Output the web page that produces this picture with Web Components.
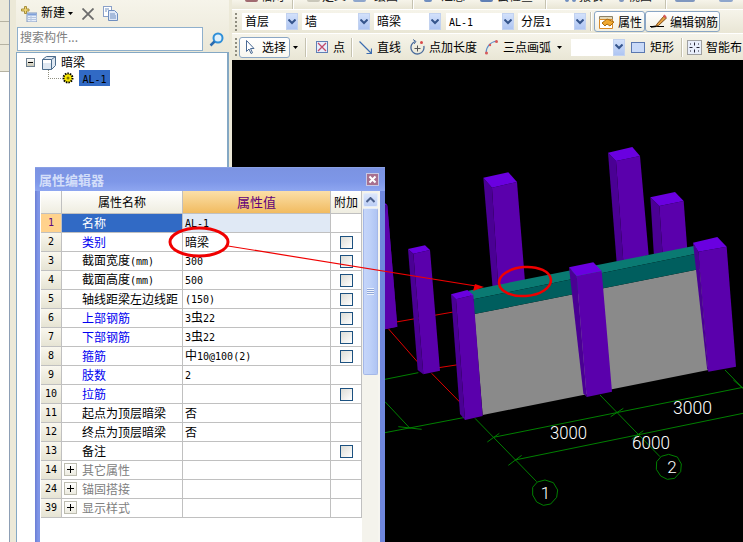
<!DOCTYPE html>
<html>
<head>
<meta charset="utf-8">
<title>属性编辑器</title>
<style>
  html, body { margin: 0; height: 100%; overflow: hidden; background: #000; }
  body { font: 12px/16px "Noto Sans CJK SC", "Liberation Sans", sans-serif; color: #000; }
</style>
</head>
<body>
<cad-workspace>
  <side-panel slot="side"></side-panel>
  <tool-bars slot="bars"></tool-bars>
  <scene-view slot="scene"></scene-view>
  <prop-editor>
    <prop-row num="1" name="名称" value="AL-1" selected></prop-row>
    <prop-row num="2" name="类别" value="暗梁" kind="link" check></prop-row>
    <prop-row num="3" name="截面宽度(mm)" value="300" check></prop-row>
    <prop-row num="4" name="截面高度(mm)" value="500" check></prop-row>
    <prop-row num="5" name="轴线距梁左边线距" value="(150)" check></prop-row>
    <prop-row num="6" name="上部钢筋" value="3虫22" kind="link" check></prop-row>
    <prop-row num="7" name="下部钢筋" value="3虫22" kind="link" check></prop-row>
    <prop-row num="8" name="箍筋" value="中10@100(2)" kind="link" check></prop-row>
    <prop-row num="9" name="肢数" value="2" kind="link"></prop-row>
    <prop-row num="10" name="拉筋" kind="link" check></prop-row>
    <prop-row num="11" name="起点为顶层暗梁" value="否"></prop-row>
    <prop-row num="12" name="终点为顶层暗梁" value="否"></prop-row>
    <prop-row num="13" name="备注" check></prop-row>
    <prop-row num="14" name="其它属性" kind="group"></prop-row>
    <prop-row num="24" name="锚固搭接" kind="group"></prop-row>
    <prop-row num="39" name="显示样式" kind="group"></prop-row>
  </prop-editor>
  <markup-layer></markup-layer>
</cad-workspace>

<script>
// half width latin, like the bitmap font of the old app
const latin = text => text.replace(/[\x20-\x7e]+/g, m => `<span class="n">${m}</span>`)
const LATIN_CSS = `.n { font: 10px/16px "DejaVu Sans Mono", monospace; white-space: pre; }`

class CadWorkspace extends HTMLElement {
  constructor() {
    super()
    this.attachShadow({ mode: 'open' }).innerHTML = `
      <style>
        :host {
          display: grid;
          grid-template-columns: 232px 511px;
          grid-template-rows: 60px 482px;
          width: 743px;
          height: 542px;
          position: relative;
          overflow: hidden;
        }
        ::slotted([slot="side"]) { grid-row: 1 / 3; }
      </style>
      <slot name="side"></slot>
      <slot name="bars"></slot>
      <slot name="scene"></slot>
      <slot></slot>
    `
  }
}

class SidePanel extends HTMLElement {
  constructor() {
    super()
    this.attachShadow({ mode: 'open' }).innerHTML = `
      <style>
        :host { display: flex; background: #ece9d8; height: 542px; }
        .tabs { width: 9px; background: #fff; border-right: 1px solid #8d9fb5; }
        .tabs div { background: #ebe8d9; border-bottom: 1px solid #b5b2a2; box-sizing: border-box; }
        .main {
          margin-left: 6px;
          width: 213px;
          display: flex;
          flex-direction: column;
          background: linear-gradient(#f6f4ea, #ebe8d8 50px);
        }
        .new { height: 27px; display: flex; align-items: center; padding-left: 5px; }
        .new svg { display: block; }
        .new span { margin: -3px 0 0 4px; }
        .search { display: flex; height: 24px; margin-left: 1px; }
        .search .box {
          width: 186px;
          box-sizing: border-box;
          border: 1px solid #8fb0cc;
          background: #fff;
          color: #808080;
          padding-left: 2px;
          line-height: 18px;
        }
        .search .go { margin: 5px 0 0 6px; }
        .tree {
          flex: 1;
          margin-top: 1px;
          background: #fff;
          border: 1px solid #84a8c4;
          border-width: 1px 2px 0 1px;
          position: relative;
        }
        .node { display: flex; align-items: center; height: 16px; }
        .root { margin: 1px 0 0 9px; }
        .root .exp {
          width: 7px; height: 7px;
          border: 1px solid #6c7f8f;
          background: linear-gradient(#fff, #c9c6b4);
          display: flex; align-items: center; justify-content: center;
        }
        .root .exp i { width: 5px; height: 1px; background: #000; display: block; }
        .root svg { margin-left: 7px; }
        .root span { margin-left: 5px; }
        .leaf { margin: 0 0 0 31px; }
        .leaf .dots {
          width: 12px; height: 8px; margin-top: -8px;
          border: dotted #8f8f80; border-width: 0 0 1px 1px;
        }
        .leaf svg { margin-left: 1px; }
        .leaf span.sel {
          margin-left: 5px;
          width: 31px; height: 16px;
          background: #316ac5;
          text-align: center;
        }
        ${LATIN_CSS}
        .grip { width: 3px; }
      </style>
      <div class="tabs">
        <div style="height:22px"></div>
        <div style="height:23px"></div>
        <div style="height:27px"></div>
      </div>
      <div class="main">
        <div class="new">
          <svg width="16" height="16" viewBox="0 0 16 16">
            <rect x="6" y="7" width="10" height="9" fill="#e6eefb" stroke="#7f97bf"/>
            <rect x="6.5" y="7.5" width="9" height="2" fill="#7f9fd8"/>
            <path d="M6 11.5h10M6 13.5h10M10 10v6" stroke="#b5c5df"/>
            <path d="M3.5 0.5h2v2.5h2.5v2h-2.5v2.500h-2v-2.500h-3v-2h3z" fill="#f2d675" stroke="#a8903c"/>
          </svg>
          <span>新建</span>
          <svg style="margin-left:3px" width="5" height="3" viewBox="0 0 5 3"><path d="M0 0h5L2.500 3z"/></svg>
          <svg style="margin-left:9px" width="12" height="12" viewBox="0 0 12 12"><path d="M0.500 0.500l11 11M11.500 0.500l-11 11" stroke="#6b6b6b" stroke-width="1.800"/></svg>
          <svg style="margin-left:9px" width="15" height="15" viewBox="0 0 15 15">
            <rect x="0.500" y="0.500" width="8" height="10" fill="#fff" stroke="#8aa0c8"/>
            <path d="M5.500 4.500h6l3 3v7h-9z" fill="#dfe8f8" stroke="#6f8ebf"/>
            <path d="M7 8h5M7 10h6M7 12h6M2 3h4M2 5h2" stroke="#6f8ebf"/>
          </svg>
        </div>
        <div class="search">
          <div class="box">搜索构件...</div>
          <svg class="go" width="15" height="15" viewBox="0 0 15 15">
            <circle cx="9" cy="6" r="4.500" fill="#dff0fb" stroke="#2f8fd8" stroke-width="2"/>
            <path d="M5.500 9.500L1.500 13.500" stroke="#2a6cb0" stroke-width="2.500"/>
          </svg>
        </div>
        <div class="tree">
          <div class="node root">
            <div class="exp"><i></i></div>
            <svg width="14" height="15" viewBox="0 0 14 15">
              <path d="M0.500 4.500l4-3h9v9l-4 4h-9z" fill="#dfe8f2" stroke="#4c6c8c"/>
              <path d="M0.500 4.500h9v10M9.500 4.500l4-3" fill="none" stroke="#4c6c8c"/>
              <path d="M1 5h8v3H1z" fill="#fff"/>
            </svg>
            <span>暗梁</span>
          </div>
          <div class="node leaf">
            <div class="dots"></div>
            <svg width="12" height="12" viewBox="0 0 12 12">
              <circle cx="6" cy="6" r="4.500" fill="#f8e800" stroke="#000" stroke-dasharray="1.500 1" stroke-width="2"/>
              <circle cx="6" cy="6" r="1.500" fill="#8a7a00"/>
            </svg>
            <span class="sel"><span class="n">AL-1</span></span>
          </div>
        </div>
      </div>
      <div class="grip"></div>
    `
  }
}

class DropSelect extends HTMLElement {
  constructor() {
    super()
    this.attachShadow({ mode: 'open' })
  }

  connectedCallback() {
    this.shadowRoot.innerHTML = `
      <style>
        :host {
          display: flex;
          height: 17px;
          background: #fff;
          line-height: 15px;
        }
        span.t { flex: 1; padding-left: 3px; overflow: hidden; white-space: nowrap; }
        .n { font: 10px/15px "DejaVu Sans Mono", monospace; white-space: pre; }
        .a {
          width: 12px;
          background: linear-gradient(#d3e1fb, #aec5f2);
          border: 1px solid #c2d2f0;
          box-sizing: border-box;
          display: flex; align-items: center; justify-content: center;
        }
      </style>
      <span class="t">${latin(this.getAttribute('value') || '')}</span>
      <div class="a"><svg width="8" height="6" viewBox="0 0 8 6"><path d="M0.500 0.500L4 4l3.500-3.500" fill="none" stroke="#35558c" stroke-width="2"/></svg></div>
    `
  }
}

class ToolButton extends HTMLElement {
  constructor() {
    super()
    this.attachShadow({ mode: 'open' })
  }

  connectedCallback() {
    this.shadowRoot.innerHTML = `
      <style>
        :host { display: flex; align-items: center; white-space: nowrap; }
        :host([boxed]) {
          height: 21px;
          box-sizing: border-box;
          border: 1px solid #8aa6c4;
          border-radius: 3px;
          background: linear-gradient(#fff, #f1efe2);
        }
        span { margin-left: var(--gap, 5px); }
      </style>
      <slot></slot><span>${this.getAttribute('label') || ''}</span>
    `
  }
}

class ToolBars extends HTMLElement {
  constructor() {
    super()
    this.attachShadow({ mode: 'open' }).innerHTML = `
      <style>
        :host { display: block; background: #ece9d8; }
        .row { display: flex; align-items: center; position: relative; background: linear-gradient(#f6f4ea, #e9e6d5); }
        .r1 { height: 9px; overflow: hidden; align-items: flex-end; border-bottom: 1px solid #fff; }
        .r1 .item { flex: none; margin-bottom: 5px; height: 16px; color: #222; white-space: nowrap; display: flex; }
        .r1 .ic { width: 13px; height: 14px; background: #8ea6cc; border-radius: 2px; display: block; }
        .r2 { height: 23px; border-bottom: 1px solid #fff; }
        .r3 { height: 26px; }
        .grip {
          width: 2px; height: 18px; margin-left: 3px; flex: none;
          background: repeating-linear-gradient(#8f8d7f 0 2px, transparent 2px 4px);
        }
        .sep { width: 1px; height: 19px; background: #c5c2b0; flex: none; border-right: 1px solid #fff; }
        .r1 .sep { height: 9px; }
        svg { display: block; flex: none; }
        drop-select, tool-button { flex: none; }
      </style>
      <div class="row r1">
        <div class="item" style="margin-left:13px"><i class="ic" style="background:#a06a70"></i><span style="margin-left:2px">轴网</span></div>
        <div class="sep" style="margin-left:8px"></div>
        <div class="item" style="margin-left:13px"><i class="ic" style="background:#c9c7ba"></i><span style="margin-left:2px">定义</span></div>
        <div class="item" style="margin-left:7px"><i class="ic"></i><span style="margin-left:8px">绘图</span></div>
        <div class="sep" style="margin-left:14px"></div>
        <div class="item" style="margin-left:10px"><i class="ic" style="width:8px;background:#6f8ebf"></i><span style="margin-left:9px">汇总</span></div>
        <div class="item" style="margin-left:15px"><i class="ic" style="background:#5f7fb5"></i><span style="margin-left:4px">云检查</span></div>
        <div class="sep" style="margin-left:12px"></div>
        <div class="item" style="margin-left:18px"><i class="ic" style="background:#6f8ebf;width:4px"></i><i class="ic" style="background:#6f8ebf;width:4px;margin-left:3px"></i><span style="margin-left:3px">报表</span></div>
        <div class="item" style="margin-left:16px"><i class="ic" style="background:#7f97bf;width:5px"></i><span style="margin-left:4px">视图</span></div>
        <div class="sep" style="margin-left:13px"></div>
        <div class="item" style="margin-left:8px"><i class="ic" style="background:#7f97bf;width:20px"></i></div>
        <div class="item" style="margin-left:24px"><i class="ic" style="background:#8ea6cc;width:14px"></i></div>
        <div class="item" style="margin-left:34px"><i class="ic" style="background:#c9c7ba;width:17px"></i></div>
      </div>
      <div class="row r2">
        <div class="grip"></div>
        <drop-select value="首层" style="width:56px;margin-left:5px"></drop-select>
        <drop-select value="墙" style="width:68px;margin-left:4px"></drop-select>
        <drop-select value="暗梁" style="width:67px;margin-left:4px"></drop-select>
        <drop-select value="AL-1" style="width:68px;margin-left:5px"></drop-select>
        <drop-select value="分层1" style="width:68px;margin-left:4px"></drop-select>
        <div class="sep" style="margin-left:4px"></div>
        <tool-button boxed label="属性" style="width:51px;margin-left:2px;--gap:3px">
          <svg style="margin-left:4px" width="16" height="16" viewBox="0 0 16 16">
            <path d="M0.500 2.500h13v3h-13z" fill="#e4d9b8" stroke="#8c8268"/>
            <path d="M0.500 5.500h13v9h-13z" fill="#fff" stroke="#d88a28"/>
            <path d="M3 9l5-4 7 3-4 4-3-2-2 2z" fill="#f0a830" stroke="#a86a10"/>
          </svg>
        </tool-button>
        <tool-button boxed label="编辑钢筋" style="width:75px;--gap:3px">
          <svg style="margin-left:4px" width="17" height="15" viewBox="0 0 17 15">
            <path d="M0 12.500h14" stroke="#000"/>
            <path d="M1 13l7-1" stroke="#000" stroke-width="1.500"/>
            <path d="M7 10l7-8 2.500 2-8 7.500-2.500 0.500z" fill="#e6a040" stroke="#80501c"/>
            <path d="M13 2l1.500-1.500 2 2L15 4.500z" fill="#d85a5a"/>
          </svg>
        </tool-button>
      </div>
      <div class="row r3">
        <div class="grip"></div>
        <tool-button boxed label="选择" style="width:51px;margin-left:2px;--gap:7px;background:linear-gradient(#fff,#f8f7f0)">
          <svg style="margin-left:6px" width="9" height="14" viewBox="0 0 9 14"><path d="M0.500 0.500v11l2.500-2.500 2 4.500 1.500-0.700-2-4.300h3.500z" fill="#fff" stroke="#4a6a94"/></svg>
        </tool-button>
        <svg style="margin-left:3px" width="5" height="3" viewBox="0 0 5 3"><path d="M0 0h5L2.500 3z"/></svg>
        <div class="sep" style="margin-left:7px"></div>
        <tool-button label="点" style="margin-left:9px">
          <svg width="12" height="12" viewBox="0 0 12 12">
            <rect x="0.500" y="0.500" width="11" height="11" fill="#e8eefb" stroke="#5f7fb5"/>
            <path d="M2 2l8 8M10 2l-8 8" stroke="#c24a6a" stroke-width="1.300"/>
          </svg>
        </tool-button>
        <div class="sep" style="margin-left:6px"></div>
        <tool-button label="直线" style="margin-left:6px">
          <svg width="13" height="13" viewBox="0 0 13 13"><path d="M0.500 0.500l12 12M12.500 7.500v5h-5" fill="none" stroke="#3c6cb0" stroke-width="1.200"/></svg>
        </tool-button>
        <tool-button label="点加长度" style="margin-left:9px;--gap:4px">
          <svg width="15" height="16" viewBox="0 0 15 16">
            <path d="M5 2.500A6.500 6.500 0 1 0 13.800 7" fill="none" stroke="#4a6c9c" stroke-width="1.300"/>
            <path d="M3 0.500l3 2-2 2.500" fill="none" stroke="#4a6c9c"/>
            <path d="M7.500 6.500v6M4.500 9.500h6" stroke="#555"/>
            <circle cx="11.500" cy="3.500" r="1.500" fill="#d84a4a"/>
          </svg>
        </tool-button>
        <tool-button label="三点画弧" style="margin-left:8px">
          <svg width="13" height="15" viewBox="0 0 13 15">
            <path d="M1 14C1 7 5 2 12 1" fill="none" stroke="#5f8fc8" stroke-width="1.200"/>
            <circle cx="1.500" cy="13" r="1.500" fill="#d85a5a"/>
            <circle cx="5" cy="5" r="1.200" fill="#d85a5a"/>
            <circle cx="11.500" cy="1.500" r="1.500" fill="#d85a5a"/>
          </svg>
        </tool-button>
        <svg style="margin-left:6px" width="5" height="3" viewBox="0 0 5 3"><path d="M0 0h5L2.500 3z"/></svg>
        <drop-select style="width:54px;margin-left:9px"></drop-select>
        <tool-button label="矩形" style="margin-left:6px;--gap:5px">
          <svg width="14" height="11" viewBox="0 0 14 11"><rect x="0.500" y="0.500" width="13" height="10" fill="#c9daf8" stroke="#5a78b0"/></svg>
        </tool-button>
        <div class="sep" style="margin-left:7px"></div>
        <tool-button label="智能布" style="margin-left:4px;--gap:4px">
          <svg width="15" height="15" viewBox="0 0 15 15">
            <rect x="0.500" y="0.500" width="14" height="14" fill="#e8eefb" stroke="#555" stroke-dasharray="1 1"/>
            <path d="M7.500 2.500v3M7.500 9.500v3M2.500 7.500h3M9.500 7.500h3M3 4h1M11 4h1M3 11h1M11 11h1" stroke="#223"/>
          </svg>
        </tool-button>
      </div>
    `
  }
}

class SceneView extends HTMLElement {
  constructor() {
    super()

    // points below are in 3x crop units, see the group transforms
    const column = (top, side, front) => `
      <polygon points="${side}" fill="#4a0094"/>
      <polygon points="${front}" fill="#5a00ac"/>
      <polygon points="${top}" fill="#6a00e0"/>
    `
    const line = (x1, y1, x2, y2) => `<line x1="${x1}" y1="${y1}" x2="${x2}" y2="${y2}"/>`

    this.attachShadow({ mode: 'open' }).innerHTML = `
      <style>
        :host { display: block; background: #000; position: relative; overflow: hidden; }
        svg { display: block; }
        text { fill: #fff; font-family: Roboto, "Liberation Sans", sans-serif; font-weight: 300; }
      </style>
      <svg width="511" height="482" viewBox="232 60 511 482">
        <g transform="translate(380 380) scale(.33333)" stroke="#008000" stroke-width="3" fill="none">
          ${line(15, 158, 255, 112)}
          ${line(340, 172, 1089, 22)}
          ${line(405, 240, 1089, 100)}
          ${line(285, 115, 470, 305)}
          ${line(660, 45, 840, 230)}
          ${line(15, 65, 90, 145)}
          ${line(1060, 0, 1089, 25)}
          ${line(322, 186, 358, 160)}
          ${line(385, 256, 425, 226)}
          ${line(692, 110, 730, 85)}
          ${line(55, 140, 125, 148)}
          ${line(755, 178, 790, 152)}
          <polygon points="495,300 520,308 533,330 530,352 512,372 490,376 470,366 458,345 458,322 472,306"/>
          <polygon points="866,223 892,231 904,252 902,275 884,295 862,298 842,288 829,268 830,245 844,229"/>
        </g>
        <g transform="translate(380 140) scale(.33333)">
          <g stroke="#008000" stroke-width="3" fill="none">
            ${line(15, 718, 115, 698)}
            ${line(1035, 690, 1089, 745)}
          </g>
          <g stroke="#e00000" stroke-width="3" fill="none">
            ${line(15, 552, 220, 516)}
            ${line(170, 684, 235, 674)}
            ${line(25, 566, 125, 680)}
            ${line(155, 700, 245, 792)}
          </g>
          ${column('-40,170 15,190 22,196 -20,190', '15,190 22,196 52,560 15,568', '22,196 52,560 15,568 -30,400')}
          ${column('84,327 135,316 150,330 100,341', '84,327 100,341 130,703 113,690', '100,341 150,330 180,692 130,703')}
          ${column('310,113 385,97 411,126 336,143', '310,113 336,143 355,445 338,445', '336,143 411,126 435,425 355,445')}
          ${column('684,38 757,21 780,48 708,63', '684,38 708,63 730,365 710,368', '708,63 780,48 806,345 730,365')}
          ${column('811,172 885,156 911,183 838,198', '811,172 838,198 848,345 822,350', '838,198 911,183 922,330 848,345')}
          <polygon points="283,522 960,387 985,690 308,825" fill="#8a8a8a"/>
          <polygon points="265,452 945,317 955,340 280,478" fill="#0a7a72"/>
          <polygon points="280,478 955,340 960,387 283,522" fill="#005e5e"/>
          ${column('213,463 262,450 280,465 228,478', '213,463 228,478 255,840 240,822', '228,478 280,465 308,828 255,840')}
          ${column('567,382 640,367 665,393 590,408', '567,382 590,408 620,771 610,760', '590,408 665,393 696,755 620,771')}
          ${column('939,308 1012,291 1040,320 955,335', '939,308 955,335 985,695 981,685', '955,335 1040,320 1068,680 985,695')}
        </g>
        <text x="550" y="439" font-size="19" textLength="37" lengthAdjust="spacingAndGlyphs">3000</text>
        <text x="632" y="449" font-size="19" textLength="38" lengthAdjust="spacingAndGlyphs">6000</text>
        <text x="673" y="414" font-size="19" textLength="39" lengthAdjust="spacingAndGlyphs">3000</text>
        <text x="545.500" y="499" font-size="17" text-anchor="middle">1</text>
        <text x="672" y="473" font-size="17" text-anchor="middle">2</text>
      </svg>
    `
  }
}

class PropRow extends HTMLElement {
  constructor() {
    super()
    this.attachShadow({ mode: 'open' })
  }

  connectedCallback() {
    const kind = this.getAttribute('kind')
    const box = kind === 'group' ? '<i class="plus"></i>' : ''
    const check = this.hasAttribute('check') ? '<i class="check"></i>' : ''

    this.shadowRoot.innerHTML = `
      <style>
        :host {
          display: grid;
          grid-template-columns: 21px 121px 148px 31px;
          height: 19px;
          box-sizing: border-box;
          border-bottom: 1px solid #c0c0c0;
          line-height: 16px;
        }
        div { border-right: 1px solid #c0c0c0; box-sizing: border-box; display: flex; align-items: center; white-space: pre; min-width: 0; }
        .num { justify-content: center; background: linear-gradient(#f9f7ee, #e6e4d4); }
        .name { padding-left: 20px; position: relative; }
        .val { padding-left: 2px; overflow: hidden; }
        .add { justify-content: center; }
        :host([kind="link"]) .name { color: #0000f0; }
        :host([kind="group"]) .name { color: #808080; }
        :host([selected]) .num { background: #ffd28c; color: #5a0a80; }
        :host([selected]) .name { background: #316ac5; color: #fff; }
        :host([selected]) .val { background: #e0e9f5; }
        .check {
          width: 11px; height: 11px;
          border: 1px solid #1c5180;
          background: linear-gradient(135deg, #dcdcd6, #fff);
          display: block;
        }
        .plus {
          position: absolute; left: 2px; top: 2px;
          width: 11px; height: 11px;
          border: 1px solid #bdbdb0;
          background:
            linear-gradient(#000, #000) center / 7px 1px no-repeat,
            linear-gradient(#000, #000) center / 1px 7px no-repeat,
            linear-gradient(#fff, #ecebe0);
          display: block;
        }
        ${LATIN_CSS}
      </style>
      <div class="num"><span class="n">${this.getAttribute('num')}</span></div>
      <div class="name">${box}<span>${latin(this.getAttribute('name') || '')}</span></div>
      <div class="val"><span>${latin(this.getAttribute('value') || '')}</span></div>
      <div class="add">${check}</div>
    `
  }
}

class PropEditor extends HTMLElement {
  constructor() {
    super()
    this.attachShadow({ mode: 'open' }).innerHTML = `
      <style>
        :host {
          display: flex;
          flex-direction: column;
          position: absolute;
          left: 35px;
          top: 167px;
          width: 350px;
          height: 375px;
          box-sizing: border-box;
          background: linear-gradient(90deg, #6a7dd4, #7f95e6 3px, #6f86dc);
          padding: 0 5px;
          border-top: 1px solid #8aa0e4;
        }
        .title {
          height: 23px;
          margin: 0 -5px;
          padding: 0 6px 0 4px;
          display: flex;
          align-items: center;
          justify-content: space-between;
          background: linear-gradient(#7b93e2, #7e97e8 60%, #8ea6f0);
          color: #d3def9;
          font-weight: 700;
          font-size: 13px;
        }
        .close {
          width: 13px; height: 13px;
          background: #a8708f;
          border: 1px solid #c8c8e4;
          box-sizing: border-box;
          display: block;
        }
        .close svg { display: block; }
        .body { flex: 1; display: flex; background: #fff; min-height: 0; }
        .table { width: 321px; margin-left: 1px; }
        .head {
          display: grid;
          grid-template-columns: 21px 121px 148px 31px;
          height: 23px;
          border-bottom: 1px solid #c0c0c0;
          box-sizing: border-box;
          line-height: 22px;
          text-align: center;
        }
        .head div { background: linear-gradient(#fff, #efede0); border-right: 1px solid #c0c0c0; box-sizing: border-box; }
        .head .on { background: linear-gradient(#fbdfa8, #f1bb60); color: #62007a; font-size: 13px; }
        .bar { width: 16px; margin-left: 0; background: #f4f3ec; display: flex; flex-direction: column; padding: 2px 0 0 1px; box-sizing: border-box; }
        .up {
          width: 15px; height: 14px; box-sizing: border-box;
          background: linear-gradient(#dce6fb, #bccef6);
          border: 1px solid #e4ecfb;
          border-radius: 2px;
          display: flex; align-items: center; justify-content: center;
        }
        .thumb {
          width: 15px; height: 167px; margin-top: 1px; box-sizing: border-box;
          background: linear-gradient(90deg, #c5d5f9, #bdd0f8 50%, #afc4f3);
          border: 1px solid #a4b8e8;
          border-top-color: #e4ecfb;
          border-radius: 2px;
          display: flex; align-items: center; justify-content: center;
        }
        .thumb i { width: 7px; height: 7px; display: block; background: repeating-linear-gradient(#eef3fd 0 1px, #8ea6d8 1px 2px); }
        .rim { width: 2px; background: #f6f5ef; }
      </style>
      <div class="title">
        <span>属性编辑器</span>
        <div class="close"><svg width="11" height="11" viewBox="0 0 11 11"><path d="M2.500 2.500l6 6M8.500 2.500l-6 6" stroke="#fff" stroke-width="2"/></svg></div>
      </div>
      <div class="body">
        <div class="table">
          <div class="head">
            <div></div><div>属性名称</div><div class="on">属性值</div><div>附加</div>
          </div>
          <slot></slot>
        </div>
        <div class="bar">
          <div class="up"><svg width="9" height="6" viewBox="0 0 9 6"><path d="M0.500 5L4.500 1l4 4" fill="none" stroke="#4a5f8c" stroke-width="2"/></svg></div>
          <div class="thumb"><i></i></div>
        </div>
        <div class="rim"></div>
      </div>
    `
  }
}

class MarkupLayer extends HTMLElement {
  constructor() {
    super()
    this.attachShadow({ mode: 'open' }).innerHTML = `
      <style>
        :host { display: block; position: absolute; left: 0; top: 0; pointer-events: none; }
        svg { display: block; }
      </style>
      <svg width="743" height="542" viewBox="0 0 743 542" fill="none" stroke="#f00000">
        <ellipse cx="199" cy="242" rx="29" ry="14" stroke-width="3"/>
        <line x1="228" y1="246" x2="476" y2="286" stroke-width="1.200"/>
        <polygon points="475,284 484,287 473,291" fill="#f00000" stroke="none"/>
        <ellipse cx="525" cy="281.500" rx="26" ry="14.500" stroke-width="2.500" transform="rotate(-4 525 281.500)"/>
      </svg>
    `
  }
}

customElements.define('cad-workspace', CadWorkspace)
customElements.define('side-panel', SidePanel)
customElements.define('drop-select', DropSelect)
customElements.define('tool-button', ToolButton)
customElements.define('tool-bars', ToolBars)
customElements.define('scene-view', SceneView)
customElements.define('prop-row', PropRow)
customElements.define('prop-editor', PropEditor)
customElements.define('markup-layer', MarkupLayer)
</script>
</body>
</html>
